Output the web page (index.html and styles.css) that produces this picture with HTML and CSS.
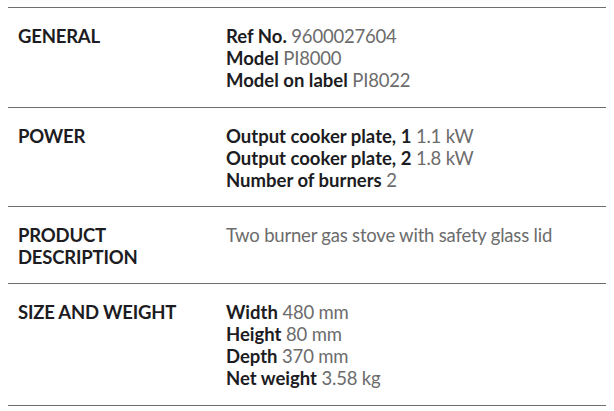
FILE: index.html
```html
<!DOCTYPE html>
<html>
<head>
<meta charset="utf-8">
<link rel="stylesheet" href="styles.css">
</head>
<body>
<div class="specs">
  <div class="row">
    <div class="label">GENERAL</div>
    <div class="values">
      <div><b>Ref No.</b> 9600027604</div>
      <div><b>Model</b> PI8000</div>
      <div><b>Model on label</b> PI8022</div>
    </div>
  </div>
  <div class="row">
    <div class="label">POWER</div>
    <div class="values">
      <div><b>Output cooker plate, 1</b> 1.1 kW</div>
      <div><b>Output cooker plate, 2</b> 1.8 kW</div>
      <div><b>Number of burners</b> 2</div>
    </div>
  </div>
  <div class="row">
    <div class="label">PRODUCT<br>DESCRIPTION</div>
    <div class="values">
      <div>Two burner gas stove with safety glass lid</div>
    </div>
  </div>
  <div class="row">
    <div class="label">SIZE AND WEIGHT</div>
    <div class="values">
      <div><b>Width</b> 480 mm</div>
      <div><b>Height</b> 80 mm</div>
      <div><b>Depth</b> 370 mm</div>
      <div><b>Net weight</b> 3.58 kg</div>
    </div>
  </div>
</div>
</body>
</html>
```
FILE: styles.css
```css
html, body { background: #fff; }
body {
  margin: 7px 8px 0 8px;
  font-family: Lato, "Noto Sans", sans-serif;
  font-size: 18.5px;
  line-height: 22px;
  color: #1c1c22;
}
.specs {
  width: 599px;
  border-top: 1px solid #6e6e6e;
}
.row {
  display: grid;
  grid-template-columns: 208px 1fr;
  padding: 17px 0 15px 10px;
  border-bottom: 1px solid #6e6e6e;
}
.row:first-child,
.row:last-child { padding-bottom: 16px; }
.label {
  font-weight: 700;
  color: #1c1c22;
  letter-spacing: -0.2px;
}
.values {
  color: #6c6c6c;
  letter-spacing: -0.2px;
}
.values b {
  font-weight: 700;
  color: #1c1c22;
  letter-spacing: 0;
}
```
